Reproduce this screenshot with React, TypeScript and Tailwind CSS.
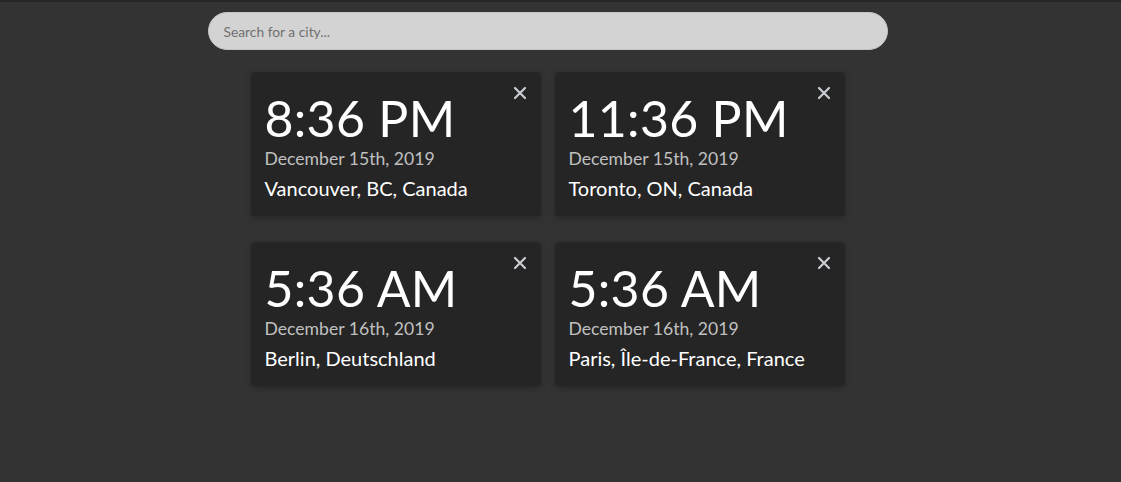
import React from "react";

const cards = [
  { time: "8:36 PM", date: "December 15th, 2019", city: "Vancouver, BC, Canada" },
  { time: "11:36 PM", date: "December 15th, 2019", city: "Toronto, ON, Canada" },
  { time: "5:36 AM", date: "December 16th, 2019", city: "Berlin, Deutschland" },
  { time: "5:36 AM", date: "December 16th, 2019", city: "Paris, Île-de-France, France" },
];

export default function App() {
  return (
    <div className="min-h-[482px] w-full bg-[#333333] border-t-2 border-[#262626] font-['Lato','Open_Sans',sans-serif]">
      <div className="w-[1095px] flex flex-col items-center pt-[10px]">
        <input
          placeholder="Search for a city..."
          className="w-[680px] h-[38px] rounded-full bg-[#d3d3d3] px-[15px] text-[13.8px] text-[#333] placeholder:text-[#6f6f6f] outline-none border border-[#c4c4c4] font-['Lato',sans-serif]"
        />
        <div className="grid grid-cols-[290px_290px] gap-x-[14px] gap-y-[26px] mt-[22px]">
          {cards.map((c, i) => (
            <div
              key={i}
              className="relative h-[144px] bg-[#252525] rounded-[4px] shadow-[0_2px_6px_rgba(0,0,0,0.25)] pl-[14px] pt-[20px]"
            >
              <button className="absolute right-[14px] top-[12px] leading-none">
                <svg width="14" height="14" viewBox="0 0 14 14" className="mt-[2px]">
                  <path d="M2 2 L12 12 M12 2 L2 12" stroke="#c9cdd3" strokeWidth="2.2" strokeLinecap="round" />
                </svg>
              </button>
              <div className="text-[50px] leading-[52px] text-white font-normal tracking-[0.3px]">{c.time}</div>
              <div className="text-[17.6px] leading-[24px] text-[#c0c0c0] mt-[3px]">{c.date}</div>
              <div className="text-[20px] leading-[26px] text-white mt-[4px]">{c.city}</div>
            </div>
          ))}
        </div>
      </div>
    </div>
  );
}
